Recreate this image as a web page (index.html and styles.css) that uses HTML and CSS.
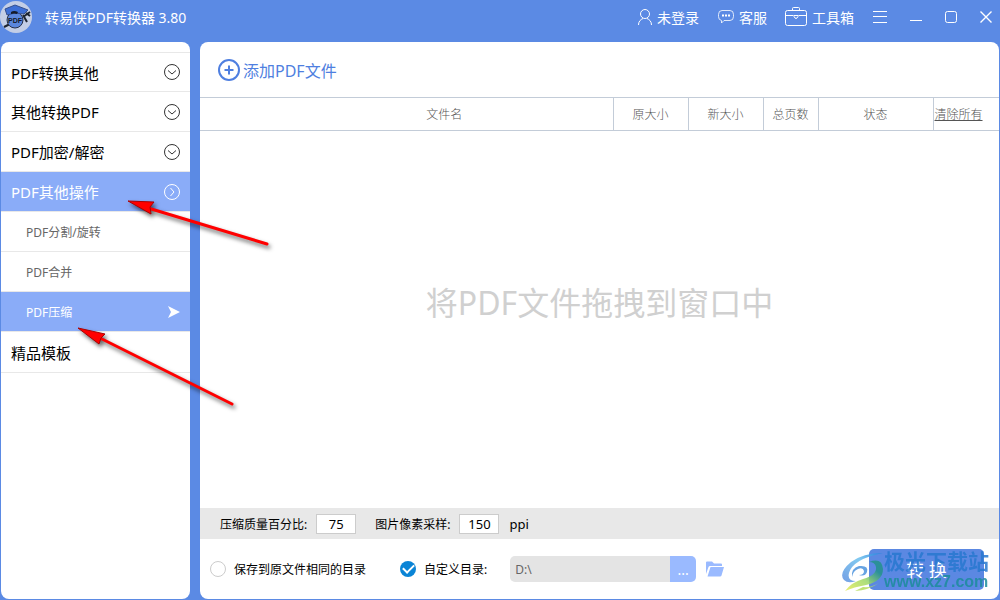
FILE: index.html
```html
<!DOCTYPE html>
<html lang="zh-CN">
<head>
<meta charset="utf-8">
<title>转易侠PDF转换器 3.80</title>
<link rel="stylesheet" href="styles.css">
</head>
<body>
<div class="app">
  <header class="titlebar">
    <svg class="logo" width="32" height="34" viewBox="0 0 32 34" aria-hidden="true">
      <circle cx="16" cy="17" r="16" fill="#c3cee6"/>
      <path d="M4 27l6-3M23 17l7-5M23 15l4 7M26 13l4 3" fill="none" stroke="#1d2430" stroke-width="2"/>
      <circle cx="15" cy="20" r="8" fill="#5b87dd" stroke="#26304a"/>
      <path d="M5 9 15 5l13 5-4 4-9-1-8 2z" fill="#3d6fd6" stroke="#35508f"/>
      <path d="M11 12q3-2 7 0l-1 2q-3-1-6 0z" fill="#141a28"/>
      <text x="15" y="23" class="logo-text">PDF</text>
    </svg>
    <h1 class="title">转易侠PDF转换器 3.80</h1>
    <nav class="tools">
      <button class="tool user">
        <svg width="16" height="18" viewBox="0 0 16 18"><circle cx="8" cy="6" r="4.500"/><path d="M1.500 17c0-3.500 2-5.500 4.500-6.500M14.500 17c0-3.500-2-5.500-4.500-6.500"/></svg>
        <span>未登录</span>
      </button>
      <button class="tool chat">
        <svg width="18" height="18" viewBox="0 0 18 18"><path d="M5 2.500h8q3.500 0 3.500 4v2q0 4-3.500 4H7L4.500 15v-2.500q-3-.5-3-4v-2q0-4 3.500-4z" opacity=".8"/><path d="M5 7.500h2M8 7.500h2M11 7.500h2" stroke-width="2"/></svg>
        <span>客服</span>
      </button>
      <button class="tool toolbox">
        <svg width="22" height="20" viewBox="0 0 22 20"><rect x=".5" y="3.500" width="21" height="15" rx="2"/><path d="M7.500 3.500v-2q0-1 1-1h5q1 0 1 1v2M.5 8.500h8M13.500 8.500h8M9 8.500h4v1q-2 4-4 0z"/></svg>
        <span>工具箱</span>
      </button>
    </nav>
    <div class="window-buttons">
      <button aria-label="菜单"><svg width="14" height="12" viewBox="0 0 14 12"><path d="M0 .5h14M0 5.500h14M0 11.500h14"/></svg></button>
      <button aria-label="最小化"><svg width="12" height="12" viewBox="0 0 12 12"><path d="M0 9.500h12"/></svg></button>
      <button aria-label="最大化"><svg width="12" height="12" viewBox="0 0 12 12"><rect x=".5" y=".5" width="11" height="11" rx="2"/></svg></button>
      <button aria-label="关闭"><svg width="12" height="12" viewBox="0 0 12 12"><path d="m.5.500 11 11M11.500.500l-11 11" stroke-width="1.400"/></svg></button>
    </div>
  </header>

  <div class="body">
    <nav class="sidebar">
      <button class="item">PDF转换其他<svg width="16" height="16" viewBox="0 0 16 16"><circle cx="8" cy="8" r="7.500"/><path d="m4 6.500 4 3.500 4-3.500"/></svg></button>
      <button class="item">其他转换PDF<svg width="16" height="16" viewBox="0 0 16 16"><circle cx="8" cy="8" r="7.500"/><path d="m4 6.500 4 3.500 4-3.500"/></svg></button>
      <button class="item">PDF加密/解密<svg width="16" height="16" viewBox="0 0 16 16"><circle cx="8" cy="8" r="7.500"/><path d="m4 6.500 4 3.500 4-3.500"/></svg></button>
      <button class="item active">PDF其他操作<svg width="16" height="16" viewBox="0 0 16 16"><circle cx="8" cy="8" r="7.500"/><path d="m6.500 4 3.500 4-3.500 4"/></svg></button>
      <button class="item sub">PDF分割/旋转</button>
      <button class="item sub">PDF合并</button>
      <button class="item sub active">PDF压缩<svg class="pointer" width="12" height="12" viewBox="0 0 12 12"><path d="M0 0 12 6 0 12l3-6z"/></svg></button>
      <button class="item">精品模板</button>
    </nav>

    <main class="panel">
      <div class="add-bar">
        <button class="add">
          <svg width="22" height="22" viewBox="0 0 22 22"><circle cx="11" cy="11" r="10"/><path d="M6.500 11h9M11 6.500v9"/></svg>
          <span>添加PDF文件</span>
        </button>
      </div>
      <table class="files">
        <colgroup><col><col class="size"><col class="size"><col class="pages"><col class="status"><col class="clear"></colgroup>
        <thead><tr><th class="name-cell">文件名</th><th>原大小</th><th>新大小</th><th>总页数</th><th>状态</th><th class="clear-cell"><a href="#">清除所有</a></th></tr></thead>
      </table>
      <div class="drop">将PDF文件拖拽到窗口中</div>
      <div class="settings">
        <label for="quality">压缩质量百分比:</label>
        <input id="quality" type="text" value="75">
        <label class="sampling" for="ppi">图片像素采样:</label>
        <input id="ppi" type="text" value="150">
        <span class="unit">ppi</span>
      </div>
      <div class="output">
        <label class="choice same"><input type="radio" name="dir">保存到原文件相同的目录</label>
        <label class="choice custom"><input type="radio" name="dir" checked>自定义目录:</label>
        <div class="path">
          <input type="text" value="D:\" aria-label="目录">
          <button aria-label="浏览">...</button>
        </div>
        <button class="folder" aria-label="打开目录"><svg width="18" height="16" viewBox="0 0 18 16"><path d="M0 13V1.500Q0 .5 1 .5h5l2 2h7q1 0 1 1V5H4q-1 0-1.500 1z"/><path d="M4.500 6H18l-2.500 8.500q-.2 1-1.500 1H1.500z"/></svg></button>
        <button class="convert">转 换</button>
      </div>
    </main>
  </div>

  <div class="watermark" aria-hidden="true">
    <svg width="46" height="42" viewBox="0 0 46 42">
      <defs>
        <linearGradient id="wave" x1="0" y1="1" x2="1" y2="0"><stop offset="0" stop-color="#5d8fe0"/><stop offset=".6" stop-color="#6cc0ee"/><stop offset="1" stop-color="#2484dd"/></linearGradient>
        <linearGradient id="leaf" x1="0" y1="1" x2="1" y2="0"><stop offset="0" stop-color="#e9ec55"/><stop offset=".45" stop-color="#9bd868"/><stop offset=".75" stop-color="#23928c"/></linearGradient>
      </defs>
      <path d="M42 3Q22 3 10 12-3 23 3 30q4 4 12 1-9 0-7-8Q12 9 42 3z" fill="url(#wave)"/>
      <path d="M11 27Q10 18 18 16q10-1 8 6-2 5-8 3 5 0 5-4-1-4-6-2-5 2-6 8z" fill="#4c93dd"/>
      <path d="M28 12Q41 7 42 19q0 12-17 16-12 2-21 6 7-9 18-12 14-4 13-12-1-5-7-5z" fill="url(#leaf)"/>
      <path d="M14 41q14-1 24-8-8 5-16 4z" fill="#b6de5c"/>
    </svg>
    <div class="watermark-text"><b>极光下载站</b><strong>www.xz7.com</strong></div>
  </div>

  <svg class="arrows" width="280" height="420" viewBox="0 0 280 420" aria-hidden="true">
    <path class="shaft" d="M148 208 267 244M100 338 232 404"/>
    <path d="M128 201 154 202 150 207 151 214zM78 328 105 334 101 338 99 344z"/>
  </svg>
</div>
</body>
</html>
```
FILE: styles.css
```css
* { box-sizing: border-box; }

body {
  margin: 0;
  font-family: "Noto Sans", "Noto Sans CJK SC", sans-serif;
  font-size: 12px;
  font-weight: 400;
  color: #000;
}

button, input {
  font: inherit;
  color: inherit;
  margin: 0;
  padding: 0;
  border: 0;
  background: none;
}

svg { display: block; flex: none; }

.app {
  position: relative;
  display: flex;
  flex-direction: column;
  height: 100vh;
  background: #5b8ae4;
  overflow: hidden;
}

/* Title bar */
.titlebar {
  display: flex;
  align-items: center;
  height: 42px;
  padding: 0 8px 8px 0;
  color: #fff;
}
.logo-text {
  font: bold 7px "Liberation Sans", sans-serif;
  text-anchor: middle;
  fill: #141a28;
}
.title {
  flex: 1;
  margin: 0 0 0 13px;
  font-size: 14px;
  font-weight: 400;
}
.tools { display: flex; align-items: center; }
.tool { display: flex; align-items: center; gap: 4px; font-size: 14px; white-space: nowrap; }
.chat { margin-left: 18px; }
.toolbox { margin-left: 18px; gap: 5px; }
.titlebar button svg { fill: none; stroke: #fff; }
.window-buttons { display: flex; align-items: center; gap: 23px; margin-left: 19px; }

/* Page body */
.body {
  flex: 1;
  display: flex;
  gap: 10px;
  min-height: 0;
  padding: 0 1px 1px;
}
.sidebar {
  flex: none;
  width: 189px;
  padding-top: 10px;
  background: #fff;
  border-radius: 8px;
  overflow: hidden;
}
.item {
  display: flex;
  align-items: center;
  justify-content: space-between;
  width: 100%;
  height: 40px;
  padding: 0 10px;
  border-bottom: 1px solid #e8e8e8;
  font-size: 15px;
  text-align: left;
}
.item:first-child { border-top: 1px solid #e8e8e8; }
.item:last-child { height: 41px; }
.item svg { fill: none; stroke: #333; }
.sub { padding-left: 25px; font-size: 12px; color: #666; }
.active { background: #8aacf8; color: #fff; }
.active svg { stroke: #fff; }
.item .pointer { fill: #fff; stroke: none; }

.panel {
  flex: 1;
  display: flex;
  flex-direction: column;
  min-width: 0;
  background: #fff;
  border-radius: 8px;
  overflow: hidden;
}
.add-bar { display: flex; align-items: center; height: 55px; padding: 0 18px; }
.add {
  display: flex;
  align-items: center;
  gap: 3px;
  font-size: 16px;
  color: #4f7fe0;
}
.add svg { fill: none; stroke: #4f7fe0; stroke-width: 2; }

.files {
  width: 100%;
  table-layout: fixed;
  border-collapse: collapse;
  border-top: 1px solid #c3ccd8;
  border-bottom: 1px solid #c3ccd8;
}
.files th {
  height: 33px;
  padding: 0;
  font-weight: 300;
  color: #555;
}
.files th + th { border-left: 1px solid #c3ccd8; }
.files .name-cell { padding-left: 76px; }
.size { width: 75px; }
.pages { width: 55px; }
.status { width: 115px; }
.clear { width: 66px; }
.files .clear-cell { text-align: left; padding-left: 1px; }
.files a { color: #555; }

.drop {
  flex: 1;
  display: flex;
  align-items: center;
  justify-content: center;
  padding-bottom: 38px;
  font-size: 32px;
  color: #d0d0d0;
}

.settings {
  display: flex;
  align-items: center;
  height: 31px;
  padding: 0 20px;
  background: #e8e8e8;
}
.settings input {
  width: 40px;
  height: 20px;
  margin-left: 9px;
  border: 1px solid #ccc;
  background: #fff;
  font-size: 13px;
  text-align: center;
}
.sampling { margin-left: 19px; }
.unit { margin-left: 10px; font-size: 13px; }

.output {
  display: flex;
  align-items: center;
  height: 60px;
  padding: 0 15px 0 10px;
}
.choice { display: flex; align-items: center; gap: 8px; }
.choice input {
  appearance: none;
  width: 16px;
  height: 16px;
  border: 1px solid #ccc;
  border-radius: 50%;
}
.choice input:checked {
  display: grid;
  place-items: center;
  border: 0;
  background: #0a84d6;
}
.choice input:checked::before {
  content: "";
  width: 9px;
  height: 5px;
  margin-bottom: 3px;
  border: solid #fff;
  border-width: 0 0 2px 2px;
  rotate: -45deg;
}
.custom { margin-left: 34px; }
.path {
  display: flex;
  height: 26px;
  margin-left: 23px;
  border-radius: 5px;
  overflow: hidden;
}
.path input { width: 160px; padding-left: 5px; background: #e4e4e4; color: #666; }
.path button { width: 26px; background: #9abaff; color: #fff; font-size: 14px; }
.folder { margin-left: 10px; }
.folder svg { fill: #9abaff; }
.convert {
  width: 115px;
  height: 41px;
  margin-left: auto;
  border-radius: 5px;
  background: #5b88e2;
  color: #fff;
  font-size: 18px;
}

/* Overlays */
.watermark {
  position: absolute;
  right: 11px;
  bottom: 8px;
  display: flex;
  align-items: center;
  pointer-events: none;
  opacity: .85;
}
.watermark-text { display: flex; flex-direction: column; margin-left: -3px; color: #2878d0; }
.watermark-text b { font-size: 21px; line-height: 22px; }
.watermark-text strong { font: bold 16px/20px "Liberation Sans", sans-serif; color: #1c8c9c; }

.arrows {
  position: absolute;
  left: 0;
  top: 0;
  pointer-events: none;
  fill: #f00;
  stroke: #a00;
  stroke-width: 1;
  filter: drop-shadow(2px 3px 2px rgba(0, 0, 0, .6));
}
.arrows .shaft { stroke: #f00; stroke-width: 3; stroke-linecap: round; }
```
